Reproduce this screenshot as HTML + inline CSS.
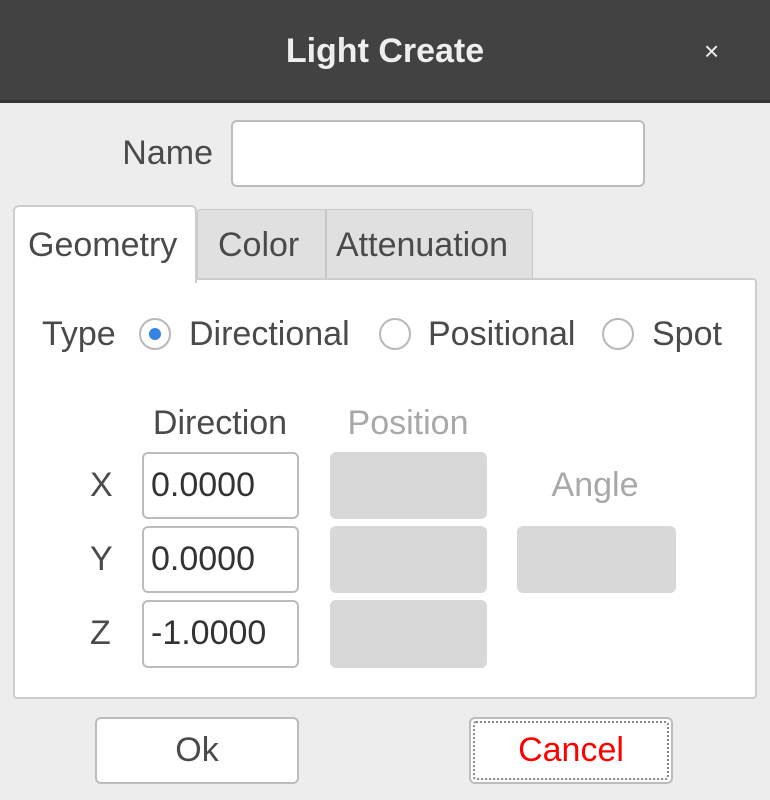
<!DOCTYPE html>
<html><head><style>
body{margin:0;width:770px;height:800px;background:#ededed;position:relative;overflow:hidden;font-family:"Liberation Sans",sans-serif;color:#4a4a4a;font-size:34px}
.a{position:absolute}
.t{position:absolute;line-height:1;white-space:nowrap}
.e{position:absolute;background:#fff;border:2px solid #bcbcbc;border-radius:6px;box-sizing:border-box}
.g{position:absolute;background:#d8d8d8;border-radius:6px}
.r{position:absolute;width:32px;height:32px;border:2px solid #b8b8b8;border-radius:50%;box-sizing:border-box;background:#fff}
.c{text-align:center}
</style></head><body>
<div class="a" style="left:0;top:0;width:770px;height:100px;background:#424242;border-bottom:3px solid #363636"></div>
<div class="t" style="left:0;width:770px;top:34px;text-align:center;color:#eee;font-weight:bold;font-size:34px">Light Create</div>
<div class="t" style="left:704px;top:38px;color:#eee;font-size:26px">×</div>

<div class="t" style="left:100px;width:113px;text-align:right;top:136px">Name</div>
<div class="e" style="left:231px;top:120px;width:414px;height:67px"></div>

<div class="a" style="left:197px;top:209px;width:129px;height:70px;background:#e0e0e0;border:1px solid #c8c8c8;border-radius:4px 0 0 0;box-sizing:border-box"></div>
<div class="a" style="left:326px;top:209px;width:207px;height:70px;background:#e0e0e0;border:1px solid #c8c8c8;border-radius:0 4px 0 0;box-sizing:border-box"></div>
<div class="a" style="left:13px;top:278px;width:744px;height:421px;background:#fff;border:2px solid #cdcdcd;border-radius:4px;box-sizing:border-box"></div>
<div class="a" style="left:13px;top:205px;width:184px;height:78px;background:#fff;border:2px solid #cdcdcd;border-bottom:none;border-radius:6px 6px 0 0;box-sizing:border-box"></div>
<div class="t" style="left:28px;top:228px">Geometry</div>
<div class="t" style="left:218px;top:228px">Color</div>
<div class="t" style="left:336px;top:228px">Attenuation</div>

<div class="t" style="left:42px;top:317px">Type</div>
<div class="r" style="left:139px;top:318px"></div>
<div class="a" style="left:149px;top:328px;width:12px;height:12px;border-radius:50%;background:#3584e4"></div>
<div class="t" style="left:189px;top:317px">Directional</div>
<div class="r" style="left:379px;top:318px"></div>
<div class="t" style="left:428px;top:317px">Positional</div>
<div class="r" style="left:602px;top:318px"></div>
<div class="t" style="left:652px;top:317px">Spot</div>

<div class="t c" style="left:140px;width:160px;top:406px">Direction</div>
<div class="t c" style="left:328px;width:160px;top:406px;color:#a8a8a8">Position</div>
<div class="t c" style="left:515px;width:160px;top:468px;color:#a8a8a8">Angle</div>

<div class="t" style="left:90px;top:468px">X</div>
<div class="t" style="left:90px;top:542px">Y</div>
<div class="t" style="left:90px;top:616px">Z</div>
<div class="e" style="left:142px;top:452px;width:157px;height:67px"></div>
<div class="e" style="left:142px;top:526px;width:157px;height:67px"></div>
<div class="e" style="left:142px;top:600px;width:157px;height:68px"></div>
<div class="t" style="left:151px;top:468px;color:#333">0.0000</div>
<div class="t" style="left:151px;top:542px;color:#333">0.0000</div>
<div class="t" style="left:151px;top:616px;color:#333">-1.0000</div>
<div class="g" style="left:330px;top:452px;width:157px;height:67px"></div>
<div class="g" style="left:330px;top:526px;width:157px;height:67px"></div>
<div class="g" style="left:330px;top:600px;width:157px;height:68px"></div>
<div class="g" style="left:517px;top:526px;width:159px;height:67px"></div>

<div class="e" style="left:95px;top:717px;width:204px;height:67px"></div>
<div class="t c" style="left:95px;width:204px;top:733px">Ok</div>
<div class="e" style="left:469px;top:717px;width:204px;height:67px"></div>
<div class="a" style="left:473px;top:721px;width:196px;height:59px;border:2px dotted #888;box-sizing:border-box;border-radius:3px"></div>
<div class="t c" style="left:469px;width:204px;top:733px;color:#f00">Cancel</div>
</body></html>
